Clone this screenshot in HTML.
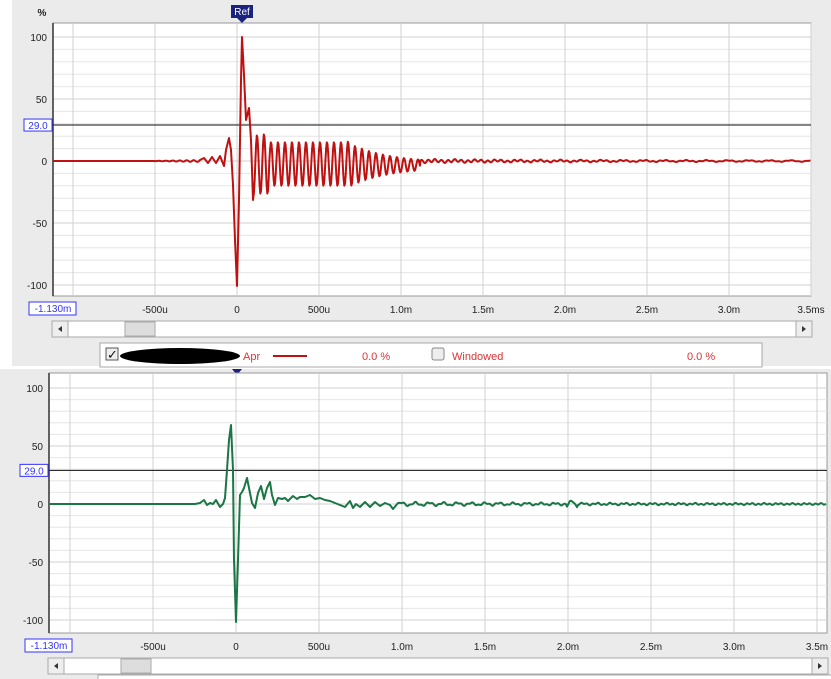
<!DOCTYPE html>
<html><head><meta charset="utf-8"><style>
body{margin:0;width:831px;height:679px;overflow:hidden;background:#fff;font-family:"Liberation Sans",sans-serif;}
svg{position:absolute;left:0;top:0}
</style></head><body>
<svg id="s" width="831" height="679" xmlns="http://www.w3.org/2000/svg" font-family="Liberation Sans, sans-serif" font-size="10">
<rect x="12" y="0" width="819" height="368" fill="#ebebeb"/>
<rect x="0" y="368" width="831" height="311" fill="#ebebeb"/>
<rect x="0" y="366" width="831" height="3" fill="#fff"/>
<g id="g1"></g>
<g id="g2"></g>
</svg>
<script>
var NS="http://www.w3.org/2000/svg",s=document.getElementById('s');
function el(p,t,a,txt){var e=document.createElementNS(NS,t);for(var k in a)e.setAttribute(k,a[k]);if(txt!=null)e.textContent=txt;p.appendChild(e);return e;}
function panel(g,o){
 el(g,'rect',{x:o.x0,y:o.y0,width:o.x1-o.x0,height:o.y1-o.y0,fill:'#fff',stroke:'#999'});
 var ys=function(v){return o.yz-(v/100)*(o.yz-o.y100);};
 for(var v=-100;v<=100;v+=10){var y=ys(v);el(g,'line',{x1:o.x0,x2:o.x1,y1:y,y2:y,stroke:(v%50==0?'#d0d0d0':'#e6e6e6'),'stroke-width':1});}
 var xs=function(t){return o.xz+t*o.pm;};
 for(var t=-1;t<=3.5;t+=0.5){var x=xs(t);el(g,'line',{x1:x,x2:x,y1:o.y0,y2:o.y1,stroke:'#d0d0d0'});}
 el(g,'line',{x1:o.x0,x2:o.x1,y1:ys(29),y2:ys(29),stroke:'#111'});
 el(g,'line',{x1:o.x0,x2:o.x0,y1:o.y0,y2:o.y1,stroke:'#333','stroke-width':1.5});
 [100,50,0,-50,-100].forEach(function(v){el(g,'text',{x:o.x0-6,y:ys(v)+4,'text-anchor':'end',fill:'#222'},String(v));});
 el(g,'rect',{x:o.x0-29,y:ys(29)-6,width:28,height:12,fill:'#fff',stroke:'#33f'});
 el(g,'text',{x:o.x0-15,y:ys(29)+4,'text-anchor':'middle',fill:'#33f'},'29.0');
 var lab=['-500u','0','500u','1.0m','1.5m','2.0m','2.5m','3.0m',o.last];
 for(var i=0;i<9;i++){el(g,'text',{x:xs(-0.5+i*0.5),y:o.y1+17,'text-anchor':'middle',fill:'#222'},lab[i]);}
 el(g,'rect',{x:o.x0-24,y:o.y1+6,width:47,height:13,fill:'#fff',stroke:'#33f'});
 el(g,'text',{x:o.x0,y:o.y1+16,'text-anchor':'middle',fill:'#33f'},'-1.130m');
 var sy=o.y1+25;
 el(g,'rect',{x:o.x0-1,y:sy,width:o.x1-o.x0+2,height:16,fill:'#fff',stroke:'#aaa'});
 el(g,'rect',{x:o.x0-1,y:sy,width:16,height:16,fill:'#eee',stroke:'#aaa'});
 el(g,'rect',{x:o.x1-15,y:sy,width:16,height:16,fill:'#eee',stroke:'#aaa'});
 el(g,'path',{d:'M'+(o.x0+9)+' '+(sy+5)+'l-4 3l4 3z',fill:'#333'});
 el(g,'path',{d:'M'+(o.x1-9)+' '+(sy+5)+'l4 3l-4 3z',fill:'#333'});
 el(g,'rect',{x:o.x0+72,y:sy+1,width:30,height:14,fill:'#ddd',stroke:'#aaa'});
 var d='';
 for(var i=0;i<o.pts.length;i++){d+=(i?'L':'M')+o.pts[i][0].toFixed(1)+' '+o.pts[i][1].toFixed(1);}
 el(g,'path',{d:d,fill:'none',stroke:o.col,'stroke-width':2,'stroke-linejoin':'round'});
}
var p=[],x;
for(x=53;x<200;x+=1)p.push([x,161+Math.sin(x*0.9)*(x>150?(x-150)/50:0)*1]);
[[200,160],[204,158],[208,163],[212,157],[216,163],[220,156],[224,166],[226,150],[229,138],[231,150],[233,185],[235,240],[237,286],[239,200],[241,80],[242,37],[244,75],[246,120],[248,112],[249,108],[251,140],[253,200]].forEach(function(q){p.push(q)});
for(x=254;x<=811;x+=0.7){var a,c=165;
 if(x<270)a=30;else if(x<345)a=22;else a=22*Math.exp(-(x-345)/40)+2;
 if(x>260&&x<350)c=164;
 var y=c-a*Math.cos((x-257)*2*Math.PI/7);
 if(x>420)y=161+Math.sin(x*0.95)*1.6*Math.exp(-(x-420)/200)+Math.sin(x*0.3)*0.6;
 p.push([x,y]);}
var q=[];
for(x=50;x<195;x+=1)q.push([x,504]);
[[195,504],[200,503],[204,500],[207,505],[210,503],[213,504],[216,500],[220,507],[223,504],[225,498],[227,470],[229,440],[231,425],[233,470],[234,560],[236,622],[238,560],[240,495],[242,492],[244,488],[247,478],[249,488],[252,503],[255,508],[258,493],[261,486],[264,499],[267,488],[270,482],[272,495],[275,505],[278,498],[282,499],[285,498],[288,501],[293,496],[297,499],[300,497],[305,497],[310,495],[315,499],[320,498],[325,500],[330,501],[335,503],[340,505],[345,507],[350,501],[353,508],[356,504],[360,507],[365,502],[370,507],[375,502],[380,506],[385,503],[390,505],[393,509],[398,503]].forEach(function(r){q.push(r)});
for(x=400;x<=826;x+=1){q.push([x,504+Math.sin(x*0.45)*1.6*Math.exp(-(x-400)/250)+Math.sin(x*1.1)*0.7+(Math.abs(x-572)<6?-3*Math.cos((x-572)*0.5):0)]);}
panel(document.getElementById('g1'),{x0:53,x1:811,y0:23,y1:296,yz:161,y100:37,xz:237,pm:164,col:'#c01010',last:'3.5ms',pts:p});
panel(document.getElementById('g2'),{x0:49,x1:827,y0:373,y1:633,yz:504,y100:388,xz:236,pm:166,col:'#1a7645',last:'3.5m',pts:q});
var g=document.getElementById('g1');
el(g,'text',{x:42,y:16,'text-anchor':'middle',fill:'#222','font-weight':'bold'},'%');
el(g,'rect',{x:231,y:5,width:22,height:13,fill:'#1a237e'});
el(g,'path',{d:'M237 18l5 5l5-5z',fill:'#1a237e'});
el(g,'text',{x:242,y:15,'text-anchor':'middle',fill:'#fff'},'Ref');
el(g,'path',{d:'M232 369l5 6l5-6z',fill:'#1a237e'});
el(g,'rect',{x:100,y:343,width:662,height:24,fill:'#fff',stroke:'#aaa'});
el(g,'rect',{x:106,y:348,width:12,height:12,fill:'#eee',stroke:'#555'});
el(g,'text',{x:107,y:359,fill:'#111','font-size':13},'✓');
el(g,'ellipse',{cx:180,cy:356,rx:60,ry:8,fill:'#000'});
el(g,'text',{x:243,y:360,fill:'#d33','font-size':11},'Apr');
el(g,'line',{x1:273,x2:307,y1:356,y2:356,stroke:'#c01010','stroke-width':2});
el(g,'text',{x:362,y:360,fill:'#d33','font-size':11},'0.0 %');
el(g,'rect',{x:432,y:348,width:12,height:12,rx:2,fill:'#eee',stroke:'#888'});
el(g,'text',{x:452,y:360,fill:'#d33','font-size':11},'Windowed');
el(g,'text',{x:687,y:360,fill:'#d33','font-size':11},'0.0 %');
el(document.getElementById('g2'),'rect',{x:98,y:675,width:742,height:6,fill:'#fff',stroke:'#aaa'});
</script>
</body></html>
